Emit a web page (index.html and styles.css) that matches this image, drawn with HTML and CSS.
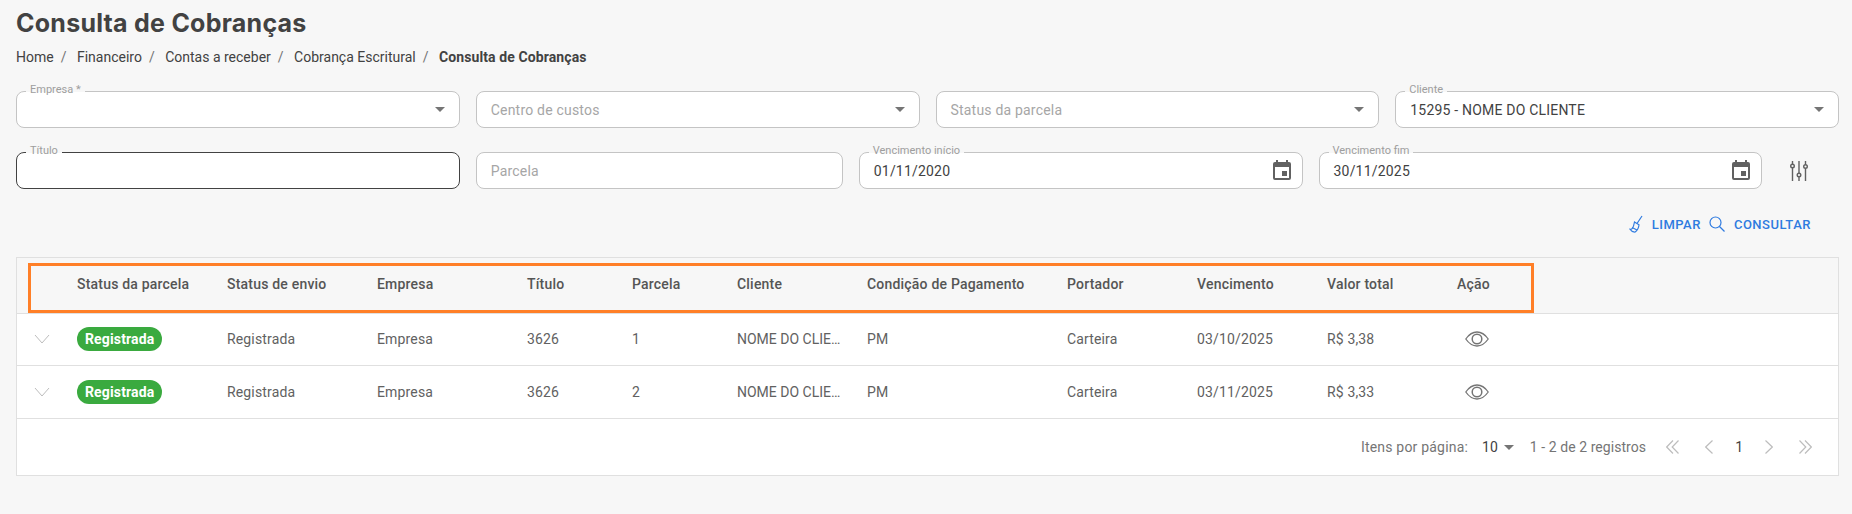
FILE: index.html
```html
<!DOCTYPE html>
<html lang="pt-BR">
<head>
    <meta charset="UTF-8">
    <meta name="viewport" content="width=device-width, initial-scale=1.0">
    <title>Consulta de Cobranças</title>
    <link rel="stylesheet" href="styles.css">
</head>
<body>
    <svg class="defs" width="0" height="0">
        <symbol id="icon-cal" viewBox="0 0 24 24"><path fill="currentColor" d="M19 3h-1V1h-2v2H8V1H6v2H5a2 2 0 0 0-2 2v14a2 2 0 0 0 2 2h14a2 2 0 0 0 2-2V5a2 2 0 0 0-2-2zm0 16H5V8h14v11zm-7-7h5v5h-5z"/></symbol>
        <symbol id="icon-eye" viewBox="0 0 24 16"><path fill="none" stroke="currentColor" stroke-width="1.300" d="M.8 8C4 3.4 7.8 1 12 1s8 2.4 11.2 7c-3.200 4.600-7 7-11.200 7S4 12.600.8 8z"/><circle cx="12" cy="8" r="4.800" fill="none" stroke="currentColor" stroke-width="1.500"/></symbol>
        <symbol id="icon-down" viewBox="0 0 16 10"><path fill="none" stroke="currentColor" d="M1 1l7 8 7-8"/></symbol>
    </svg>

    <h1 class="page-title">Consulta de Cobranças</h1>
    <div class="breadcrumb">
        <span>Home</span><span class="sep">/</span>
        <span>Financeiro</span><span class="sep">/</span>
        <span>Contas a receber</span><span class="sep">/</span>
        <span>Cobrança Escritural</span><span class="sep">/</span>
        <strong>Consulta de Cobranças</strong>
    </div>

    <div class="filters row-one">
        <div class="field"><label>Empresa *</label><span class="value"></span><i class="caret"></i></div>
        <div class="field"><span class="value placeholder">Centro de custos</span><i class="caret"></i></div>
        <div class="field"><span class="value placeholder">Status da parcela</span><i class="caret"></i></div>
        <div class="field"><label>Cliente</label><span class="value">15295 - NOME DO CLIENTE</span><i class="caret"></i></div>
    </div>
    <div class="filters row-two">
        <div class="field focused"><label>Título</label><span class="value"></span></div>
        <div class="field"><span class="value placeholder">Parcela</span></div>
        <div class="field"><label>Vencimento início</label><span class="value">01/11/2020</span><svg class="cal"><use href="#icon-cal"/></svg></div>
        <div class="field"><label>Vencimento fim</label><span class="value">30/11/2025</span><svg class="cal"><use href="#icon-cal"/></svg></div>
        <svg class="tune" viewBox="0 0 20 20" width="20" height="20">
            <g fill="none" stroke="currentColor" stroke-width="1.400">
                <path d="M3.500 0v3M3.500 7v13M10 0v12M10 16v4M16.500 0v3.500M16.500 7.500v12.500"/>
                <circle cx="3.500" cy="5" r="1.800"/><circle cx="10" cy="14" r="1.800"/><circle cx="16.500" cy="5.500" r="1.800"/>
            </g>
        </svg>
    </div>

    <div class="actions">
        <svg class="act-icon broom" viewBox="0 0 14 18" width="14" height="18">
            <g fill="none" stroke="currentColor" stroke-width="1.200">
                <path d="M13 1L8 8.500"/>
                <path d="M5.500 7l4.500 2.800c-.3 3-1.700 5.800-3.800 7.200-2 .2-4-.8-5.200-2.700 2 .2 3.200-.6 4.500-7.300z"/>
                <path d="M3 12.500l5 2.500"/>
            </g>
        </svg>
        <span class="act-text">LIMPAR</span>
        <svg class="act-icon search" viewBox="0 0 16 16" width="16" height="16">
            <g fill="none" stroke="currentColor" stroke-width="1.200">
                <circle cx="6.500" cy="6.500" r="5.500"/><path d="M10.500 10.500L15.500 15.500"/>
            </g>
        </svg>
        <span class="act-text consult">CONSULTAR</span>
    </div>

    <div class="table-box">
        <table>
            <thead>
                <tr>
                    <th class="c-toggle"></th>
                    <th class="c-150">Status da parcela</th>
                    <th class="c-150">Status de envio</th>
                    <th class="c-150">Empresa</th>
                    <th class="c-105">Título</th>
                    <th class="c-105">Parcela</th>
                    <th class="c-130">Cliente</th>
                    <th class="c-200">Condição de Pagamento</th>
                    <th class="c-130">Portador</th>
                    <th class="c-130">Vencimento</th>
                    <th class="c-130">Valor total</th>
                    <th>Ação</th>
                </tr>
            </thead>
            <tbody>
                <tr>
                    <td class="toggle"><svg width="16" height="10"><use href="#icon-down"/></svg></td>
                    <td><span class="badge">Registrada</span></td>
                    <td>Registrada</td>
                    <td>Empresa</td>
                    <td>3626</td>
                    <td>1</td>
                    <td><div class="clip">NOME DO CLIENTE</div></td>
                    <td>PM</td>
                    <td>Carteira</td>
                    <td>03/10/2025</td>
                    <td>R$ 3,38</td>
                    <td class="view"><svg width="24" height="16"><use href="#icon-eye"/></svg></td>
                </tr>
                <tr>
                    <td class="toggle"><svg width="16" height="10"><use href="#icon-down"/></svg></td>
                    <td><span class="badge">Registrada</span></td>
                    <td>Registrada</td>
                    <td>Empresa</td>
                    <td>3626</td>
                    <td>2</td>
                    <td><div class="clip">NOME DO CLIENTE</div></td>
                    <td>PM</td>
                    <td>Carteira</td>
                    <td>03/11/2025</td>
                    <td>R$ 3,33</td>
                    <td class="view"><svg width="24" height="16"><use href="#icon-eye"/></svg></td>
                </tr>
            </tbody>
        </table>
        <div class="pager">
            <span class="per-label">Itens por página:</span>
            <span class="per-page">10</span><i class="caret small"></i>
            <span class="count">1 - 2 de 2 registros</span>
            <svg class="pg first" viewBox="0 0 13 14" width="13" height="14"><path d="M7 .5L.7 7 7 13.500M12.500 .5L6.200 7l6.300 6.500"/></svg>
            <svg class="pg prev" viewBox="0 0 8 14" width="8" height="14"><path d="M7.500 .5L.7 7l6.800 6.500"/></svg>
            <span class="current">1</span>
            <svg class="pg next" viewBox="0 0 8 14" width="8" height="14"><path d="M.5 .5L7.300 7 .5 13.500"/></svg>
            <svg class="pg last" viewBox="0 0 13 14" width="13" height="14"><path d="M.5 .5L6.800 7 .5 13.500M6 .5L12.300 7 6 13.500"/></svg>
        </div>
        <div class="highlight"></div>
    </div>
</body>
</html>
```

FILE: styles.css
```css
* {
    box-sizing: border-box;
}
body {
    margin: 0;
    padding: 0 13px 0 16px;
    background-color: #f7f7f7;
    font-family: Roboto, Arial, sans-serif;
    font-size: 14px;
    color: #424242;
}
.defs {
    position: absolute;
}
.page-title {
    margin: 0;
    padding-top: 7px;
    height: 48px;
    font-family: Inter, Arial, sans-serif;
    font-size: 25px;
    letter-spacing: 0.25px;
    line-height: 32px;
    font-weight: 700;
    color: #424242;
}
.breadcrumb {
    height: 18px;
    line-height: 18px;
    font-size: 14px;
    color: #424242;
}
.breadcrumb .sep {
    margin: 0 7px;
    color: #757575;
}
.breadcrumb strong {
    font-weight: 700;
    letter-spacing: 0.1px;
}
.filters {
    display: grid;
    gap: 16px;
}
.row-one {
    margin-top: 25px;
    grid-template-columns: repeat(4, 1fr);
}
.row-two {
    margin-top: 24px;
    grid-template-columns: 443.75px 367px 443.75px 443.75px 1fr;
    align-items: center;
}
.field {
    position: relative;
    height: 37px;
    padding: 0 14px;
    display: flex;
    align-items: center;
    justify-content: space-between;
    background-color: #fff;
    border: 1px solid #c4c4c4;
    border-radius: 8px;
}
.field.focused {
    border-color: #424242;
}
.field label {
    position: absolute;
    top: -9px;
    left: 9px;
    padding: 0 4px;
    font-size: 11px;
    line-height: 13px;
    color: #9e9e9e;
    background: linear-gradient(#f7f7f7 70%, #fff 70%);
}
.value {
    font-size: 14px;
    letter-spacing: 0.2px;
    color: #424242;
}
.placeholder {
    color: #a6a6a6;
}
.caret {
    display: block;
    width: 0;
    height: 0;
    border-left: 5px solid transparent;
    border-right: 5px solid transparent;
    border-top: 5px solid #757575;
}
.caret.small {
    margin: 2px 0 0 6px;
}
.cal {
    width: 24px;
    height: 24px;
    margin-right: -6px;
    color: #616161;
}
.tune {
    margin-left: 11px;
    color: #616161;
}
.actions {
    margin-top: 24px;
    height: 22px;
    padding-right: 28px;
    display: flex;
    align-items: center;
    justify-content: flex-end;
    color: #2f7be0;
}
.act-text {
    font-size: 13px;
    font-weight: 500;
    letter-spacing: 0.5px;
}
.broom {
    margin-right: 9px;
}
.search {
    margin: 0 9px 0 8px;
}
.table-box {
    position: relative;
    margin-top: 22px;
    background-color: #fff;
    border: 1px solid #e0e0e0;
}
table {
    width: 100%;
    border-collapse: collapse;
    table-layout: fixed;
}
thead tr {
    background-color: #f7f7f7;
}
th {
    height: 55px;
    padding: 0 16px 2px 0;
    text-align: left;
    font-weight: 500;
    letter-spacing: 0.2px;
    color: #555;
}
td {
    height: 52.500px;
    padding: 0 16px 0 0;
    letter-spacing: 0.15px;
    color: #616161;
    border-top: 1px solid #e0e0e0;
}
tbody tr:last-child td {
    border-bottom: 1px solid #e0e0e0;
}
.c-toggle {
    width: 60px;
}
.c-105 {
    width: 105px;
}
.c-130 {
    width: 130px;
}
.c-150 {
    width: 150px;
}
.c-200 {
    width: 200px;
}
.toggle {
    padding-left: 17px;
    color: #bdbdbd;
}
.toggle svg,
.view svg {
    display: block;
}
.view {
    padding-left: 8px;
    color: #757575;
}
.badge {
    display: inline-block;
    height: 24px;
    padding: 0 8px;
    line-height: 24px;
    font-weight: 700;
    color: #fff;
    background-color: #3aaa3f;
    border-radius: 12px;
}
.clip {
    width: 110px;
    overflow: hidden;
    white-space: nowrap;
    text-overflow: ellipsis;
    letter-spacing: 0;
}
.pager {
    height: 56px;
    padding-right: 26px;
    display: flex;
    align-items: center;
    justify-content: flex-end;
    color: #757575;
}
.per-label {
    letter-spacing: 0.2px;
}
.per-page {
    margin-left: 14px;
    color: #424242;
}
.count {
    margin-left: 16px;
    letter-spacing: 0.06px;
}
.pg {
    fill: none;
    stroke: #bdbdbd;
    stroke-width: 1.200;
}
.first {
    margin-left: 20px;
}
.prev {
    margin-left: 26px;
}
.current {
    margin: 0 22px;
    color: #424242;
}
.last {
    margin-left: 26px;
}
/* orange annotation around the header */
.highlight {
    position: absolute;
    top: 5px;
    left: 11px;
    width: 1506px;
    height: 50px;
    border: 3px solid #ff7f27;
}
```
